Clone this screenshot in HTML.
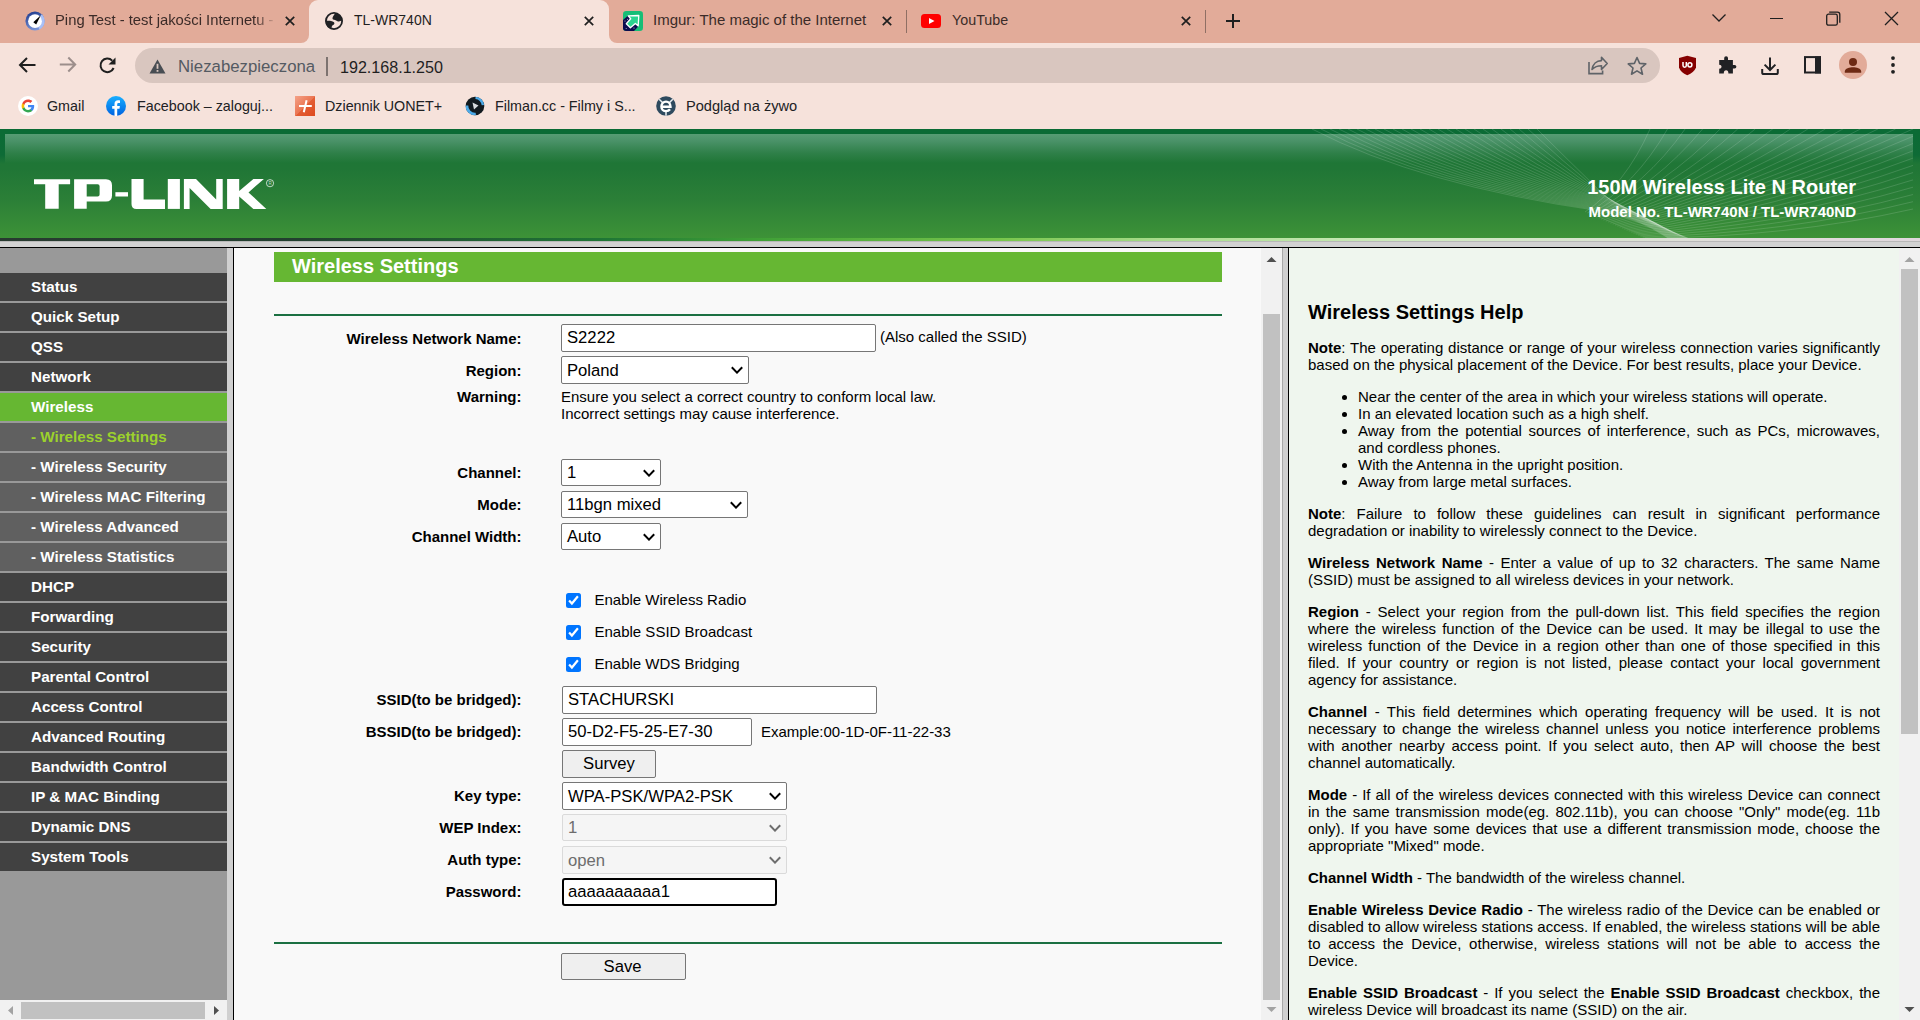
<!DOCTYPE html>
<html><head><meta charset="utf-8">
<style>
*{box-sizing:border-box}
html,body{margin:0;padding:0}
body{width:1920px;height:1020px;overflow:hidden;position:relative;font-family:"Liberation Sans",sans-serif;background:#F6E2DB}
.abs{position:absolute}
/* browser chrome */
#tabs{left:0;top:0;width:1920px;height:43px;background:#E2AB99}
#toolbar{left:0;top:43px;width:1920px;height:86px;background:#F6E2DB}
.tab-t{position:absolute;top:10px;font-size:14px;color:#202124;white-space:nowrap;line-height:20px}
.bm-t{position:absolute;top:96px;font-size:14.3px;color:#202124;white-space:nowrap;line-height:20px}
/* page */
#banner{left:0;top:129px;width:1920px;height:109px;background:linear-gradient(#0B6B35 0,#0B6B35 5px,#579C74 5px,#4A9268 12px,#2F8049 24px,#1F7636 34px,#207636 40px,#2B7F37 70px,#3D9237 109px)}
#left{left:0;top:248px;width:227px;height:772px;background:#999999}
.mi{position:absolute;left:0;width:227px;height:28px;background:#414141;color:#fff;font-weight:bold;font-size:15.2px;line-height:28px;padding-left:31px;white-space:nowrap}
.mi.sub{background:#606060}
.mi.act{background:#66B732}
.mi.cur{color:#9CD22C}
#main{left:234px;top:248px;width:1048px;height:772px;background:#F9F9F9;overflow:hidden}
#help{left:1289px;top:248px;width:631px;height:772px;background:#EFF6EE;overflow:hidden}
.lbl{position:absolute;right:1398.5px;font-weight:bold;font-size:15px;color:#000;white-space:nowrap;line-height:17px}
.txt{position:absolute;font-size:15px;color:#000;white-space:nowrap;line-height:17px}
.inp{position:absolute;background:#fff;border:1px solid #767676;border-radius:2px;font-size:16.67px;color:#000;padding-left:5px;white-space:nowrap}
.sel{position:absolute;background:#fff;border:1px solid #767676;border-radius:2px;font-size:16.67px;color:#000;padding-left:5px;padding-top:1px;white-space:nowrap}
.sel svg{position:absolute;top:50%;margin-top:-4px}
.btn{position:absolute;background:#EFEFEF;border:1px solid #767676;border-radius:2px;font-size:16.67px;color:#000;text-align:center;white-space:nowrap}
.cb{position:absolute;width:15px;height:15px;background:#0075FF;border-radius:2.5px}
.help p{margin:0}
.sel.dis{background:#F5F5F5;border-color:#DADADA;color:#6D6D6D}
.hl{position:absolute;font-size:15px;line-height:17px;color:#000;white-space:nowrap}
.j{text-align:justify;text-align-last:justify}
</style></head><body>

<!-- TAB STRIP -->
<div id="tabs" class="abs"></div>
<div class="abs" style="left:309px;top:0;width:300px;height:43px;background:#F6E2DB;border-radius:9px 9px 0 0"></div>
<div id="toolbar" class="abs"></div>
<svg class="abs" style="left:25px;top:11px" width="20" height="20" viewBox="0 0 20 20">
<defs><linearGradient id="pg" x1="0.2" y1="0" x2="0.5" y2="1"><stop offset="0" stop-color="#1E3A8C"/><stop offset="1" stop-color="#7E98DA"/></linearGradient></defs>
<circle cx="10" cy="10" r="9.6" fill="url(#pg)"/><path d="M16.8,3.2 A9.6,9.6 0 0 1 14.5,18.5 L10,10 Z" fill="#A9C0F6"/><circle cx="10" cy="10.2" r="6.9" fill="#fff"/>
<polygon points="8.3,11.3 15.8,4.2 11.2,13.4" fill="#000"/></svg>
<div class="tab-t" style="left:55px;width:222px;overflow:hidden;color:#3B2B28;font-size:14.8px;-webkit-mask-image:linear-gradient(90deg,#000 200px,transparent 222px)">Ping Test - test jakości Internetu - Internetu</div>
<svg class="abs" style="left:285px;top:16px" width="10" height="10"><path d="M0.8,0.8 L9.2,9.2 M9.2,0.8 L0.8,9.2" stroke="#1F1F1F" stroke-width="1.7"/></svg>
<div class="abs" style="left:301px;top:35px;width:8px;height:8px;background:#F6E2DB"></div><div class="abs" style="left:301px;top:35px;width:8px;height:8px;background:#E2AB99;border-radius:0 0 8px 0"></div>
<div class="abs" style="left:609px;top:35px;width:8px;height:8px;background:#F6E2DB"></div><div class="abs" style="left:609px;top:35px;width:8px;height:8px;background:#E2AB99;border-radius:0 0 0 8px"></div>
<svg class="abs" style="left:325px;top:12px" width="18" height="18" viewBox="0 0 18 18"><circle cx="9" cy="9" r="8.1" fill="none" stroke="#202124" stroke-width="1.8"/>
<path d="M10.3,1.2 C9,3 7.3,4.6 7.5,6.8 C7.8,8.1 10.2,7.7 12,8.9 C13.5,9.8 15.2,9.5 17.2,8.3 A8.4,8.4 0 0 0 10.3,1.2 Z" fill="#202124"/>
<path d="M0.8,8.6 C3.5,8.9 6.6,8.7 8.7,9.9 C9.9,10.7 9.5,12.4 8.1,13.1 C6.9,13.7 6.5,15 6.4,17.2 A8.4,8.4 0 0 1 0.8,8.6 Z" fill="#202124"/></svg>
<div class="tab-t" style="left:354px;color:#1F1F1F">TL-WR740N</div>
<svg class="abs" style="left:584px;top:16px" width="10" height="10"><path d="M0.8,0.8 L9.2,9.2 M9.2,0.8 L0.8,9.2" stroke="#1F1F1F" stroke-width="1.7"/></svg>
<svg class="abs" style="left:623px;top:11px" width="20" height="20" viewBox="0 0 20 20"><defs><clipPath id="imc"><rect x="0" y="0" width="20" height="20" rx="3.2"/></clipPath></defs>
<g clip-path="url(#imc)"><rect width="20" height="20" fill="#16BE76"/><polygon points="0,8.9 5.2,4.5 15.2,15.5 10.8,20.2 0,20.2" fill="#0B0B4E"/>
<circle cx="2" cy="10" r="0.5" fill="#ccd"/><circle cx="4.5" cy="8.2" r="0.5" fill="#ccd"/><circle cx="3.2" cy="17.5" r="0.5" fill="#ccd"/><circle cx="11" cy="17" r="0.6" fill="#ccd"/></g>
<polygon points="15.8,4.5 5.2,4.9 7.7,7.7 3.3,12.7 7.4,16.8 12.4,12.4 15.2,14.9" fill="#2BD48F" stroke="#fff" stroke-width="1.3" stroke-linejoin="round"/></svg>
<div class="tab-t" style="left:653px;color:#3B2B28;font-size:15px">Imgur: The magic of the Internet</div>
<svg class="abs" style="left:882px;top:16px" width="10" height="10"><path d="M0.8,0.8 L9.2,9.2 M9.2,0.8 L0.8,9.2" stroke="#1F1F1F" stroke-width="1.7"/></svg>
<div class="abs" style="left:906px;top:10px;width:1px;height:23px;background:#8F6F64"></div>
<svg class="abs" style="left:921px;top:14px" width="20" height="14" viewBox="0 0 20 14"><rect x="0" y="0" width="20" height="14" rx="3.5" fill="#FF0000"/><polygon points="8,4 13.5,7 8,10" fill="#fff"/></svg>
<div class="tab-t" style="left:952px;color:#3B2B28;font-size:14.3px">YouTube</div>
<svg class="abs" style="left:1181px;top:16px" width="10" height="10"><path d="M0.8,0.8 L9.2,9.2 M9.2,0.8 L0.8,9.2" stroke="#1F1F1F" stroke-width="1.7"/></svg>
<div class="abs" style="left:1205px;top:10px;width:1px;height:23px;background:#8F6F64"></div>
<svg class="abs" style="left:1225px;top:13px" width="16" height="16"><path d="M8,1 L8,15 M1,8 L15,8" stroke="#1F1F1F" stroke-width="2"/></svg>
<svg class="abs" style="left:1711px;top:12px" width="16" height="12"><polyline points="1.5,2.5 8,9 14.5,2.5" fill="none" stroke="#1F1F1F" stroke-width="1.3"/></svg>
<div class="abs" style="left:1770px;top:18px;width:13px;height:1.3px;background:#1F1F1F"></div>
<svg class="abs" style="left:1826px;top:11px" width="15" height="15"><rect x="0.7" y="3.2" width="10.6" height="11" rx="1.8" fill="none" stroke="#1F1F1F" stroke-width="1.3"/><path d="M3.2,1.2 L11.5,1.2 Q13.8,1.2 13.8,3.5 L13.8,11.8" fill="none" stroke="#1F1F1F" stroke-width="1.3"/></svg>
<svg class="abs" style="left:1884px;top:11px" width="15" height="15"><path d="M1,1 L14,14 M14,1 L1,14" stroke="#1F1F1F" stroke-width="1.3"/></svg>
<svg class="abs" style="left:18px;top:56px" width="20" height="18"><path d="M17.5,9 L2.5,9 M9,2 L2,9 L9,16" fill="none" stroke="#1F1F1F" stroke-width="2"/></svg>
<svg class="abs" style="left:58px;top:56px" width="20" height="18"><path d="M1.8,8.5 L16.8,8.5 M10.3,1.5 L17.2,8.5 L10.3,15.5" fill="none" stroke="#9C8E8B" stroke-width="2"/></svg>
<svg class="abs" style="left:98px;top:56px" width="20" height="20"><path d="M15.6,12 A6.8,6.8 0 1 1 14.2,4.6" fill="none" stroke="#1F1F1F" stroke-width="2"/><polygon points="17.5,1.5 17.5,8.5 10.5,8.5" fill="#1F1F1F"/></svg>
<div class="abs" style="left:135px;top:48px;width:1525px;height:35px;border-radius:17.5px;background:#D9C6BF"></div>
<svg class="abs" style="left:149px;top:59px" width="17" height="15"><polygon points="8.5,0.5 16.5,14.5 0.5,14.5" fill="#484D53"/><rect x="7.6" y="4.8" width="1.8" height="5" fill="#D9C6BF"/><rect x="7.6" y="11" width="1.8" height="1.8" fill="#D9C6BF"/></svg>
<div class="abs" style="left:178px;top:56.5px;font-size:16.8px;line-height:20px;color:#545A62;white-space:nowrap">Niezabezpieczona</div>
<div class="abs" style="left:326px;top:57px;width:1.5px;height:19px;background:#7D7370"></div>
<div class="abs" style="left:340px;top:56.5px;font-size:16.1px;line-height:20px;color:#1F1F1F;white-space:nowrap">192.168.1.250</div>
<svg class="abs" style="left:1587px;top:56px" width="22" height="20"><path d="M2,6 L2,17.6 L15.6,17.6 L15.6,14.5" fill="none" stroke="#5F6368" stroke-width="1.6"/><path d="M5,13.5 C5.8,8 9.5,4.6 14.5,4.6 L14.5,1.2 L20.2,7.5 L14.5,13.5 L14.5,9.8 C10.5,9.8 7.5,11 5,13.5 Z" fill="none" stroke="#5F6368" stroke-width="1.6" stroke-linejoin="round"/></svg>
<svg class="abs" style="left:1626px;top:56px" width="22" height="20"><polygon points="11,1.5 13.6,7.4 19.8,7.9 15,12 16.5,18.2 11,14.9 5.5,18.2 7,12 2.2,7.9 8.4,7.4" fill="none" stroke="#5F6368" stroke-width="1.6" stroke-linejoin="round"/></svg>
<svg class="abs" style="left:1678px;top:55px" width="19" height="21" viewBox="0 0 19 21"><path d="M9.3,0.7 L18,3 L18,12.5 Q16,17.5 9.3,20.3 Q2.6,17.5 1,12.5 L1,3 Z" fill="#850000"/><path d="M5,7.1 L5,10.6 Q5,12.2 6.7,12.2 Q8.3,12.2 8.3,10.6 L8.3,7.1" fill="none" stroke="#fff" stroke-width="1.5"/><ellipse cx="11.9" cy="9.8" rx="2" ry="2.1" fill="none" stroke="#fff" stroke-width="1.5"/></svg>
<svg class="abs" style="left:1718px;top:55px" width="20" height="20" viewBox="0 0 20 20"><path d="M1.2,5.1 H6.2 V2.9 Q6.2,1.2 8.1,1.2 Q10,1.2 10,2.9 V5.1 H14.9 V10 H16.6 Q18.4,10 18.4,11.75 Q18.4,13.5 16.6,13.5 H14.9 V18.5 H10.4 Q10.4,15.2 8.1,15.2 Q5.8,15.2 5.8,18.5 H1.2 V13.7 Q3.6,13.7 3.6,11.75 Q3.6,9.8 1.2,9.8 Z" fill="#202124"/></svg>
<svg class="abs" style="left:1760px;top:56px" width="21" height="20"><path d="M10,1.4 L10,13.5 M4.6,8.6 L10,14 L15.4,8.6" fill="none" stroke="#202124" stroke-width="2"/><path d="M2.2,13 L2.2,16.4 Q2.2,18 3.8,18 L16.2,18 Q17.8,18 17.8,16.4 L17.8,13" fill="none" stroke="#202124" stroke-width="2"/></svg>
<svg class="abs" style="left:1804px;top:56px" width="18" height="18"><rect x="1" y="1.1" width="15" height="15.4" fill="none" stroke="#202124" stroke-width="2"/><rect x="11" y="0.5" width="6" height="17" fill="#202124"/></svg>
<div class="abs" style="left:1839px;top:51px;width:28px;height:28px;border-radius:50%;background:#E2AB99"></div>
<svg class="abs" style="left:1841px;top:53px" width="24" height="24"><circle cx="12" cy="9" r="4" fill="#6E2A14"/><path d="M3.8,19.8 L3.8,18.6 C3.8,15.4 8.6,14.2 12,14.2 C15.4,14.2 20.2,15.4 20.2,18.6 L20.2,19.8 Z" fill="#6E2A14"/></svg>
<svg class="abs" style="left:1888.5px;top:56px" width="8" height="20"><circle cx="4" cy="2.1" r="1.9" fill="#1F1F1F"/><circle cx="4" cy="9" r="1.9" fill="#1F1F1F"/><circle cx="4" cy="15.8" r="1.9" fill="#1F1F1F"/></svg>
<svg class="abs" style="left:18px;top:96px" width="20" height="20" viewBox="0 0 20 20"><circle cx="10" cy="10" r="10" fill="#fff"/>
<path d="M16.2,10.2 C16.2,9.7 16.15,9.3 16.1,8.9 L10,8.9 L10,11.3 L13.5,11.3 C13.3,12.1 12.9,12.8 12.2,13.2 L12.2,14.8 L14.3,14.8 C15.5,13.7 16.2,12.1 16.2,10.2Z" fill="#4285F4"/>
<path d="M10,16.4 C11.8,16.4 13.3,15.8 14.3,14.8 L12.2,13.2 C11.6,13.6 10.9,13.9 10,13.9 C8.3,13.9 6.9,12.8 6.4,11.2 L4.3,11.2 L4.3,12.8 C5.3,14.9 7.5,16.4 10,16.4Z" fill="#34A853"/>
<path d="M6.4,11.2 C6.3,10.8 6.2,10.4 6.2,10 C6.2,9.6 6.3,9.2 6.4,8.8 L6.4,7.2 L4.3,7.2 C3.9,8.1 3.6,9 3.6,10 C3.6,11 3.9,11.9 4.3,12.8 Z" fill="#FBBC05"/>
<path d="M10,6.1 C10.9,6.1 11.8,6.4 12.4,7 L14.3,5.1 C13.2,4.1 11.7,3.6 10,3.6 C7.5,3.6 5.3,5.1 4.3,7.2 L6.4,8.8 C6.9,7.2 8.3,6.1 10,6.1Z" fill="#EA4335"/></svg>
<div class="bm-t" style="left:47px">Gmail</div>
<svg class="abs" style="left:106px;top:96px" width="20" height="20" viewBox="0 0 20 20"><defs><linearGradient id="fbg" x1="0" y1="0" x2="0" y2="1"><stop offset="0" stop-color="#19AFFF"/><stop offset="1" stop-color="#0062E0"/></linearGradient></defs><circle cx="10" cy="10" r="10" fill="url(#fbg)"/><path d="M11.2,20 L11.2,12.8 L13.5,12.8 L13.9,10 L11.2,10 L11.2,8.3 C11.2,7.5 11.5,6.9 12.6,6.9 L14,6.9 L14,4.4 C13.7,4.4 12.9,4.3 12,4.3 C9.9,4.3 8.5,5.6 8.5,7.9 L8.5,10 L6.2,10 L6.2,12.8 L8.5,12.8 L8.5,20Z" fill="#fff"/></svg>
<div class="bm-t" style="left:137px">Facebook – zaloguj...</div>
<svg class="abs" style="left:295px;top:96px" width="20" height="20" viewBox="0 0 20 20"><defs><linearGradient id="dzg" x1="0" y1="0" x2="1" y2="1"><stop offset="0" stop-color="#F4A288"/><stop offset="0.5" stop-color="#EA7552"/><stop offset="0.5" stop-color="#E35F36"/><stop offset="1" stop-color="#DE4A1E"/></linearGradient></defs><rect width="20" height="20" fill="url(#dzg)"/><path d="M4,9.9 L16.8,9.9 M11.6,4.3 L8.8,16.2" stroke="#fff" stroke-width="2"/></svg>
<div class="bm-t" style="left:325px">Dziennik UONET+</div>
<svg class="abs" style="left:465px;top:96px" width="20" height="20" viewBox="0 0 20 20"><circle cx="10" cy="10" r="9.3" fill="#121A1F"/>
<path d="M2,9.5 A8,8 0 0 0 10.8,18" fill="none" stroke="#4DAAE8" stroke-width="2.6"/><path d="M10.5,1.9 A8,8 0 0 1 17.9,9.2" fill="none" stroke="#4DAAE8" stroke-width="2.4"/>
<polygon points="7.5,6.5 13.5,9.5 9,13.5" fill="#D8DCDE"/></svg>
<div class="bm-t" style="left:495px">Filman.cc - Filmy i S...</div>
<svg class="abs" style="left:656px;top:96px" width="20" height="20" viewBox="0 0 20 20"><circle cx="10" cy="10" r="9.8" fill="#2E4A5E"/>
<path d="M3.2,3.2 L6.5,6.5 M16.8,3.2 L13.5,6.5 M10,15 L10,19.8" stroke="#E8EEF2" stroke-width="1.5"/>
<path d="M5.6,10.8 L14.5,10.8 C14.5,7.6 12.6,5.6 10,5.6 C7.4,5.6 5.4,7.8 5.4,10.4 C5.4,13.2 7.4,15.1 10.1,15.1 C11.9,15.1 13.2,14.3 14,13.3" fill="none" stroke="#fff" stroke-width="2.4"/></svg>
<div class="bm-t" style="left:686px;font-size:14.6px">Podgląd na żywo</div>

<!-- BANNER -->
<div id="banner" class="abs"></div>
<div class="abs" style="left:0;top:134px;width:5px;height:30px;background:linear-gradient(#0B6B35,#0E6B36 70%,#1F7636)"></div><div class="abs" style="left:1913px;top:134px;width:7px;height:30px;background:linear-gradient(#0B6B35,#0E6B36 70%,#1F7636)"></div>

<svg class="abs" style="left:0;top:0" width="1920" height="238"><g fill="none" stroke="#fff" stroke-opacity="0.16" stroke-width="0.9"><path d="M1312.0,129 Q1420.0,185.0 1600,211.0 Q1634.6,216.0 1668.0,238" /><path d="M1321.0,129 Q1425.9,184.0 1600,210.2 Q1634.6,215.4 1668.8,238" /><path d="M1330.0,129 Q1431.8,183.0 1600,209.4 Q1634.6,214.8 1669.6,238" /><path d="M1339.0,129 Q1437.8,182.0 1600,208.6 Q1634.5,214.3 1670.4,238" /><path d="M1348.0,129 Q1443.7,181.0 1600,207.8 Q1634.5,213.7 1671.2,238" /><path d="M1357.0,129 Q1449.6,180.0 1600,207.0 Q1634.4,213.2 1672.0,238" /><path d="M1366.0,129 Q1455.5,179.0 1600,206.2 Q1634.4,212.7 1672.8,238" /><path d="M1375.0,129 Q1461.4,178.0 1600,205.4 Q1634.3,212.2 1673.6,238" /><path d="M1384.0,129 Q1467.4,177.0 1600,204.6 Q1634.3,211.7 1674.4,238" /><path d="M1393.0,129 Q1473.3,176.0 1600,203.8 Q1634.2,211.3 1675.2,238" /><path d="M1402.0,129 Q1479.2,175.0 1600,203.0 Q1634.1,210.9 1676.0,238" /><path d="M1411.0,129 Q1485.1,174.0 1600,202.2 Q1634.0,210.5 1676.8,238" /><path d="M1420.0,129 Q1491.0,173.0 1600,201.4 Q1633.9,210.2 1677.6,238" /><path d="M1429.0,129 Q1497.0,172.0 1600,200.6 Q1633.7,210.0 1678.4,238" /><path d="M1438.0,129 Q1502.9,171.0 1600,199.8 Q1633.6,209.8 1679.2,238" /><path d="M1447.0,129 Q1508.8,170.0 1600,199.0 Q1633.4,209.6 1680.0,238" /><path d="M1456.0,129 Q1514.7,169.0 1600,198.2 Q1633.1,209.5 1680.8,238" /><path d="M1465.0,129 Q1520.6,168.0 1600,197.4 Q1632.8,209.6 1681.6,238" /><path d="M1474.0,129 Q1526.6,167.0 1600,196.6 Q1632.5,209.7 1682.4,238" /><path d="M1483.0,129 Q1532.5,166.0 1600,195.8 Q1632.0,209.9 1683.2,238" /><path d="M1492.0,129 Q1538.4,165.0 1600,195.0 Q1631.5,210.3 1684.0,238" /><path d="M1501.0,129 Q1544.3,164.0 1600,194.2 Q1630.8,210.9 1684.8,238" /><path d="M1510.0,129 Q1550.2,163.0 1600,193.4 Q1629.9,211.6 1685.6,238" /><path d="M1519.0,129 Q1556.2,162.0 1600,192.6 Q1628.7,212.6 1686.4,238" /><path d="M1528.0,129 Q1562.1,161.0 1600,191.8 Q1627.2,213.9 1687.2,238" /><path d="M1537.0,129 Q1568.0,160.0 1600,191.0 Q1625.1,215.4 1688.0,238" /><path d="M1650.0,129.0 Q1625.5,184.5 1585.0,212.0" /><path d="M1667.5,129.0 Q1635.4,185.0 1587.3,213.0" /><path d="M1685.1,129.0 Q1645.3,185.5 1589.6,214.0" /><path d="M1702.6,129.0 Q1655.3,186.0 1591.9,215.0" /><path d="M1720.1,129.0 Q1665.2,186.5 1594.2,216.0" /><path d="M1737.7,129.0 Q1675.1,187.0 1596.5,217.0" /><path d="M1755.2,129.0 Q1685.0,187.5 1598.8,218.0" /><path d="M1772.7,129.0 Q1694.9,188.0 1601.2,219.0" /><path d="M1790.3,129.0 Q1704.9,188.5 1603.5,220.0" /><path d="M1807.8,129.0 Q1714.8,189.0 1605.8,221.0" /><path d="M1825.3,129.0 Q1724.7,189.5 1608.1,222.0" /><path d="M1842.9,129.0 Q1734.6,190.0 1610.4,223.0" /><path d="M1860.4,129.0 Q1744.5,190.5 1612.7,224.0" /><path d="M1877.9,129.0 Q1754.5,191.0 1615.0,225.0" /><path d="M1895.5,129.0 Q1764.4,191.5 1617.3,226.0" /><path d="M1913.0,129.0 Q1774.3,192.0 1619.6,227.0" /><path d="M1913.0,136.3 Q1775.5,196.1 1621.9,228.0" /><path d="M1913.0,143.5 Q1776.6,200.3 1624.2,229.0" /><path d="M1913.0,150.8 Q1777.8,204.4 1626.5,230.0" /><path d="M1913.0,158.1 Q1778.9,208.5 1628.8,231.0" /><path d="M1913.0,165.4 Q1780.1,212.7 1631.2,232.0" /><path d="M1913.0,172.6 Q1781.2,216.8 1633.5,233.0" /><path d="M1913.0,179.9 Q1782.4,221.0 1635.8,234.0" /><path d="M1913.0,187.2 Q1783.5,225.1 1638.1,235.0" /><path d="M1913.0,194.5 Q1784.7,229.2 1640.4,236.0" /><path d="M1913.0,201.7 Q1785.8,233.4 1642.7,237.0" /><path d="M1913.0,209.0 Q1787.0,237.5 1645.0,238.0" /></g></svg>
<svg class="abs" style="left:0;top:0" width="300" height="240"><g fill="#fff">
<path d="M34,179.3 H70.1 V184.2 H58.7 V208.8 H45.2 V184.2 H34 Z"/>
<path d="M74.1,179.3 H106 Q112,179.3 112,185.3 V195.4 Q112,201.4 106,201.4 H86.7 V208.8 H74.1 Z M86.7,184.2 V196.5 H97.6 Q99.6,196.5 99.6,194.5 V186.2 Q99.6,184.2 97.6,184.2 Z" fill-rule="evenodd"/>
<rect x="115.4" y="192.2" width="12.6" height="4.3"/>
<path d="M131.5,179 H143.6 V199.6 H165 V208.9 H136.5 Q131.5,208.9 131.5,203.9 Z"/>
<rect x="167.8" y="179" width="12.1" height="29.9"/>
<path d="M183.9,179 H196 L216.2,199.6 V179 H222.7 V208.9 H210.6 L189.6,188 V208.9 H183.9 Z"/>
<path d="M227.1,179 H239.2 V191.1 L253.4,179 H263.9 L248.5,192.4 L266.3,208.9 H253.4 L239.2,196.4 V208.9 H227.1 Z"/>
</g><circle cx="270" cy="183.2" r="3.6" fill="none" stroke="#fff" stroke-opacity="0.7" stroke-width="1"/><text x="270" y="185" font-size="4.5" fill="#fff" fill-opacity="0.7" text-anchor="middle" font-family="Liberation Sans">R</text></svg>
<div class="abs" style="right:64px;top:176px;font-size:20px;font-weight:bold;color:#fff;line-height:23px;white-space:nowrap">150M Wireless Lite N Router</div>
<div class="abs" style="right:64px;top:202.5px;font-size:15px;font-weight:bold;color:#fff;line-height:17px;white-space:nowrap">Model No. TL-WR740N / TL-WR740ND</div>
<div class="abs" style="left:0;top:238px;width:1920px;height:3px;background:linear-gradient(90deg,#283A30 0,#22402F 300px,#1E7535 600px,#3FA036 760px,#78C64C 1000px,#A8DC8C 1160px,#CDEABD 1400px,#E2DCDE 1760px,#E0D8DC 1920px)"></div>
<div class="abs" style="left:0;top:241px;width:1920px;height:6px;background:#D2D2D2;border-top:1px solid #B8B8B8"></div>
<div class="abs" style="left:0;top:247px;width:1920px;height:1px;background:#000"></div>

<!-- LEFT MENU -->
<div id="left" class="abs"></div>
<div class="mi" style="top:273px">Status</div>
<div class="mi" style="top:303px">Quick Setup</div>
<div class="mi" style="top:333px">QSS</div>
<div class="mi" style="top:363px">Network</div>
<div class="mi act" style="top:393px">Wireless</div>
<div class="mi sub cur" style="top:423px">- Wireless Settings</div>
<div class="mi sub" style="top:453px">- Wireless Security</div>
<div class="mi sub" style="top:483px">- Wireless MAC Filtering</div>
<div class="mi sub" style="top:513px">- Wireless Advanced</div>
<div class="mi sub" style="top:543px">- Wireless Statistics</div>
<div class="mi" style="top:573px">DHCP</div>
<div class="mi" style="top:603px">Forwarding</div>
<div class="mi" style="top:633px">Security</div>
<div class="mi" style="top:663px">Parental Control</div>
<div class="mi" style="top:693px">Access Control</div>
<div class="mi" style="top:723px">Advanced Routing</div>
<div class="mi" style="top:753px">Bandwidth Control</div>
<div class="mi" style="top:783px">IP &amp; MAC Binding</div>
<div class="mi" style="top:813px">Dynamic DNS</div>
<div class="mi" style="top:843px">System Tools</div>
<div class="abs" style="left:0;top:1000px;width:227px;height:20px;background:#F1F1F1"></div>
<div class="abs" style="left:21px;top:1002px;width:184px;height:17px;background:#C1C1C1"></div>
<svg class="abs" style="left:0;top:1000px" width="227" height="20"><polygon points="13,6 13,15 8,10.5" fill="#A3A3A3"/><polygon points="214,6 214,15 219,10.5" fill="#505050"/></svg>
<div class="abs" style="left:227px;top:248px;width:6px;height:772px;background:#D0D0D0"></div>
<div class="abs" style="left:233px;top:248px;width:1px;height:772px;background:#000"></div>

<!-- MAIN -->
<div id="main" class="abs"></div>
<div class="abs" style="left:274px;top:252px;width:948px;height:30px;background:#66B733"></div>
<div class="abs" style="left:292px;top:255px;font-size:20px;font-weight:bold;color:#fff;line-height:23px;white-space:nowrap">Wireless Settings</div>
<div class="abs" style="left:274px;top:314px;width:948px;height:2px;background:#1B7042"></div>
<div class="lbl" style="top:330.1px">Wireless Network Name:</div>
<div class="inp" style="left:561px;top:324px;width:315px;height:28px;line-height:25px">S2222</div>
<div class="txt" style="left:880px;top:328.3px;">(Also called the SSID)</div>
<div class="lbl" style="top:362.0px">Region:</div>
<div class="sel" style="left:561px;top:356px;width:188px;height:28px;line-height:25px">Poland<svg width="12" height="8" style="right:5px"><polyline points="0.8,1.2 6,6.6 11.2,1.2" fill="none" stroke="#000" stroke-width="2"/></svg></div>
<div class="lbl" style="top:388.1px">Warning:</div>
<div class="txt" style="left:561px;top:387.8px;">Ensure you select a correct country to conform local law.</div>
<div class="txt" style="left:561px;top:405.0px;">Incorrect settings may cause interference.</div>
<div class="lbl" style="top:464.3px">Channel:</div>
<div class="sel" style="left:561px;top:459px;width:100px;height:27px;line-height:24px">1<svg width="12" height="8" style="right:5px"><polyline points="0.8,1.2 6,6.6 11.2,1.2" fill="none" stroke="#000" stroke-width="2"/></svg></div>
<div class="lbl" style="top:496.3px">Mode:</div>
<div class="sel" style="left:561px;top:491px;width:187px;height:27px;line-height:24px">11bgn mixed<svg width="12" height="8" style="right:5px"><polyline points="0.8,1.2 6,6.6 11.2,1.2" fill="none" stroke="#000" stroke-width="2"/></svg></div>
<div class="lbl" style="top:528.3px">Channel Width:</div>
<div class="sel" style="left:561px;top:523px;width:100px;height:27px;line-height:24px">Auto<svg width="12" height="8" style="right:5px"><polyline points="0.8,1.2 6,6.6 11.2,1.2" fill="none" stroke="#000" stroke-width="2"/></svg></div>
<div class="cb" style="left:566px;top:593px"><svg width="15" height="15" style="position:absolute;left:0;top:0"><polyline points="3.1,7.5 5.9,10.5 11.9,3.3" fill="none" stroke="#fff" stroke-width="2.2"/></svg></div>
<div class="txt" style="left:594.5px;top:591.3px;">Enable Wireless Radio</div>
<div class="cb" style="left:566px;top:625px"><svg width="15" height="15" style="position:absolute;left:0;top:0"><polyline points="3.1,7.5 5.9,10.5 11.9,3.3" fill="none" stroke="#fff" stroke-width="2.2"/></svg></div>
<div class="txt" style="left:594.5px;top:623.3px;">Enable SSID Broadcast</div>
<div class="cb" style="left:566px;top:657px"><svg width="15" height="15" style="position:absolute;left:0;top:0"><polyline points="3.1,7.5 5.9,10.5 11.9,3.3" fill="none" stroke="#fff" stroke-width="2.2"/></svg></div>
<div class="txt" style="left:594.5px;top:655.3px;">Enable WDS Bridging</div>
<div class="lbl" style="top:691.3px">SSID(to be bridged):</div>
<div class="inp" style="left:562px;top:686px;width:315px;height:28px;line-height:25px">STACHURSKI</div>
<div class="lbl" style="top:722.9px">BSSID(to be bridged):</div>
<div class="inp" style="left:562px;top:718px;width:190px;height:28px;line-height:25px">50-D2-F5-25-E7-30</div>
<div class="txt" style="left:761px;top:723.3px;">Example:00-1D-0F-11-22-33</div>
<div class="btn" style="left:562px;top:750px;width:94px;height:28px;line-height:25px">Survey</div>
<div class="lbl" style="top:786.9px">Key type:</div>
<div class="sel" style="left:562px;top:782px;width:225px;height:28px;line-height:25px">WPA-PSK/WPA2-PSK<svg width="12" height="8" style="right:5px"><polyline points="0.8,1.2 6,6.6 11.2,1.2" fill="none" stroke="#000" stroke-width="2"/></svg></div>
<div class="lbl" style="top:818.6px">WEP Index:</div>
<div class="sel dis" style="left:562px;top:814px;width:225px;height:27px;line-height:24px">1<svg width="12" height="8" style="right:5px"><polyline points="0.8,1.2 6,6.6 11.2,1.2" fill="none" stroke="#6d6d6d" stroke-width="2"/></svg></div>
<div class="lbl" style="top:850.8px">Auth type:</div>
<div class="sel dis" style="left:562px;top:846px;width:225px;height:28px;line-height:25px">open<svg width="12" height="8" style="right:5px"><polyline points="0.8,1.2 6,6.6 11.2,1.2" fill="none" stroke="#6d6d6d" stroke-width="2"/></svg></div>
<div class="lbl" style="top:882.6px">Password:</div>
<div class="inp" style="left:562px;top:878px;width:215px;height:28px;line-height:24px;border:2px solid #000;border-radius:3px;padding-left:4px">aaaaaaaaaa1</div>
<div class="abs" style="left:274px;top:942px;width:948px;height:2px;background:#1B7042"></div>
<div class="btn" style="left:561px;top:953px;width:125px;height:27px;line-height:26px;padding-right:2px">Save</div>
<div class="abs" style="left:1261px;top:248px;width:21px;height:772px;background:#F1F1F1"></div>
<div class="abs" style="left:1263px;top:314px;width:17px;height:686px;background:#C1C1C1"></div>
<svg class="abs" style="left:1261px;top:254px" width="21" height="10"><polygon points="5.5,8 10.5,3 15.5,8" fill="#505050"/></svg>
<svg class="abs" style="left:1261px;top:1005px" width="21" height="10"><polygon points="5.5,2 10.5,7 15.5,2" fill="#A3A3A3"/></svg>
<div class="abs" style="left:1282px;top:248px;width:1px;height:772px;background:#A8A8A8"></div>
<div class="abs" style="left:1283px;top:248px;width:5px;height:772px;background:#D0D0D0"></div>
<div class="abs" style="left:1288px;top:248px;width:1px;height:772px;background:#000"></div>

<!-- HELP -->
<div id="help" class="abs"></div>
<div class="abs" style="left:1308px;top:301px;font-size:20px;font-weight:bold;color:#000;line-height:23px;white-space:nowrap">Wireless Settings Help</div>
<div class="hl j" style="left:1308px;top:339.0px;width:572px"><b>Note</b>: The operating distance or range of your wireless connection varies significantly</div>
<div class="hl" style="left:1308px;top:356.0px;width:572px">based on the physical placement of the Device. For best results, place your Device.</div>
<div class="abs" style="left:1342px;top:394.5px;width:5px;height:5px;border-radius:50%;background:#000"></div>
<div class="hl" style="left:1358px;top:387.8px;width:522px">Near the center of the area in which your wireless stations will operate.</div>
<div class="abs" style="left:1342px;top:411.5px;width:5px;height:5px;border-radius:50%;background:#000"></div>
<div class="hl" style="left:1358px;top:404.8px;width:522px">In an elevated location such as a high shelf.</div>
<div class="abs" style="left:1342px;top:428.5px;width:5px;height:5px;border-radius:50%;background:#000"></div>
<div class="hl j" style="left:1358px;top:421.8px;width:522px">Away from the potential sources of interference, such as PCs, microwaves,</div>
<div class="hl" style="left:1358px;top:438.8px;width:522px">and cordless phones.</div>
<div class="abs" style="left:1342px;top:462.5px;width:5px;height:5px;border-radius:50%;background:#000"></div>
<div class="hl" style="left:1358px;top:455.8px;width:522px">With the Antenna in the upright position.</div>
<div class="abs" style="left:1342px;top:479.5px;width:5px;height:5px;border-radius:50%;background:#000"></div>
<div class="hl" style="left:1358px;top:472.8px;width:522px">Away from large metal surfaces.</div>
<div class="hl j" style="left:1308px;top:505.3px;width:572px"><b>Note</b>: Failure to follow these guidelines can result in significant performance</div>
<div class="hl" style="left:1308px;top:522.3px;width:572px">degradation or inability to wirelessly connect to the Device.</div>
<div class="hl j" style="left:1308px;top:554.3px;width:572px"><b>Wireless Network Name</b> - Enter a value of up to 32 characters. The same Name</div>
<div class="hl" style="left:1308px;top:571.3px;width:572px">(SSID) must be assigned to all wireless devices in your network.</div>
<div class="hl j" style="left:1308px;top:603.3px;width:572px"><b>Region</b> - Select your region from the pull-down list. This field specifies the region</div>
<div class="hl j" style="left:1308px;top:620.3px;width:572px">where the wireless function of the Device can be used. It may be illegal to use the</div>
<div class="hl j" style="left:1308px;top:637.3px;width:572px">wireless function of the Device in a region other than one of those specified in this</div>
<div class="hl j" style="left:1308px;top:654.3px;width:572px">filed. If your country or region is not listed, please contact your local government</div>
<div class="hl" style="left:1308px;top:671.3px;width:572px">agency for assistance.</div>
<div class="hl j" style="left:1308px;top:703.3px;width:572px"><b>Channel</b> - This field determines which operating frequency will be used. It is not</div>
<div class="hl j" style="left:1308px;top:720.3px;width:572px">necessary to change the wireless channel unless you notice interference problems</div>
<div class="hl j" style="left:1308px;top:737.3px;width:572px">with another nearby access point. If you select auto, then AP will choose the best</div>
<div class="hl" style="left:1308px;top:754.3px;width:572px">channel automatically.</div>
<div class="hl j" style="left:1308px;top:786.3px;width:572px"><b>Mode</b> - If all of the wireless devices connected with this wireless Device can connect</div>
<div class="hl j" style="left:1308px;top:803.3px;width:572px">in the same transmission mode(eg. 802.11b), you can choose "Only" mode(eg. 11b</div>
<div class="hl j" style="left:1308px;top:820.3px;width:572px">only). If you have some devices that use a different transmission mode, choose the</div>
<div class="hl" style="left:1308px;top:837.3px;width:572px">appropriate "Mixed" mode.</div>
<div class="hl" style="left:1308px;top:869.3px;width:572px"><b>Channel Width</b> - The bandwidth of the wireless channel.</div>
<div class="hl j" style="left:1308px;top:901.3px;width:572px"><b>Enable Wireless Device Radio</b> - The wireless radio of the Device can be enabled or</div>
<div class="hl j" style="left:1308px;top:918.3px;width:572px">disabled to allow wireless stations access. If enabled, the wireless stations will be able</div>
<div class="hl j" style="left:1308px;top:935.3px;width:572px">to access the Device, otherwise, wireless stations will not be able to access the</div>
<div class="hl" style="left:1308px;top:952.3px;width:572px">Device.</div>
<div class="hl j" style="left:1308px;top:984.3px;width:572px"><b>Enable SSID Broadcast</b> - If you select the <b>Enable SSID Broadcast</b> checkbox, the</div>
<div class="hl" style="left:1308px;top:1001.3px;width:572px">wireless Device will broadcast its name (SSID) on the air.</div>
<div class="hl" style="left:1308px;top:1033.3px;width:572px"><b>Enable WDS Bridging</b> - If you want to bridge more WLANs</div>
<div class="abs" style="left:1899px;top:248px;width:21px;height:772px;background:#F1F1F1"></div>
<div class="abs" style="left:1901px;top:269px;width:17px;height:465px;background:#C1C1C1"></div>
<svg class="abs" style="left:1899px;top:254px" width="21" height="10"><polygon points="5.5,8 10.5,3 15.5,8" fill="#A3A3A3"/></svg>
<svg class="abs" style="left:1899px;top:1005px" width="21" height="10"><polygon points="5.5,2 10.5,7 15.5,2" fill="#505050"/></svg>

</body></html>
